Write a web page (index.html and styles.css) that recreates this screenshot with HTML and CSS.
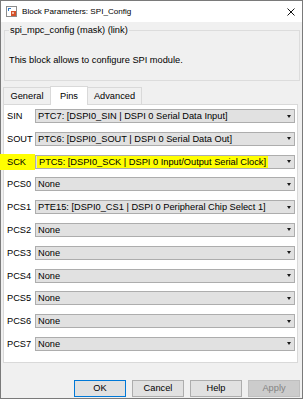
FILE: index.html
```html
<!DOCTYPE html>
<html>
<head>
  <meta charset="utf-8">
  <title>Block Parameters: SPI_Config</title>
  <link rel="stylesheet" href="styles.css">
</head>
<body>
<div class="dialog">
  <div class="titlebar">
    <svg class="app-icon" width="11" height="11" viewBox="0 0 11 11">
      <rect x="0.5" y="0.5" width="10" height="10" fill="#fff" stroke="#8c8c8c"/>
      <path d="M2 2h3v1H3v2H2z" fill="#2f78c4"/>
      <rect x="5" y="5" width="5" height="5" fill="#d4502a"/>
      <rect x="6" y="6" width="2" height="2" fill="#f3b9a4"/>
    </svg>
    <span class="title">Block Parameters: SPI_Config</span>
    <svg class="close" width="8" height="8" viewBox="0 0 8 8">
      <path d="M0.5 0.5L7.5 7.5M7.5 0.5L0.5 7.5" stroke="#111" stroke-width="1"/>
    </svg>
  </div>

  <fieldset class="mask">
    <legend>spi_mpc_config (mask) (link)</legend>
    <p>This block allows to configure SPI module.</p>
  </fieldset>

  <div class="tabs">
    <div class="tab tab-general">General</div>
    <div class="tab tab-pins active">Pins</div>
    <div class="tab tab-advanced">Advanced</div>
  </div>

  <div class="panel">
    <span class="label">SIN</span>
    <div class="combo"><span class="value">PTC7: [DSPI0_SIN | DSPI 0 Serial Data Input]</span><i class="arrow"></i></div>

    <span class="label">SOUT</span>
    <div class="combo"><span class="value">PTC6: [DSPI0_SOUT | DSPI 0 Serial Data Out]</span><i class="arrow"></i></div>

    <span class="label marked">SCK</span>
    <div class="combo"><span class="value marked">PTC5: [DSPI0_SCK | DSPI 0 Input/Output Serial Clock]</span><i class="arrow"></i></div>

    <span class="label">PCS0</span>
    <div class="combo"><span class="value">None</span><i class="arrow"></i></div>

    <span class="label">PCS1</span>
    <div class="combo"><span class="value">PTE15: [DSPI0_CS1 | DSPI 0 Peripheral Chip Select 1]</span><i class="arrow"></i></div>

    <span class="label">PCS2</span>
    <div class="combo"><span class="value">None</span><i class="arrow"></i></div>

    <span class="label">PCS3</span>
    <div class="combo"><span class="value">None</span><i class="arrow"></i></div>

    <span class="label">PCS4</span>
    <div class="combo"><span class="value">None</span><i class="arrow"></i></div>

    <span class="label">PCS5</span>
    <div class="combo"><span class="value">None</span><i class="arrow"></i></div>

    <span class="label">PCS6</span>
    <div class="combo"><span class="value">None</span><i class="arrow"></i></div>

    <span class="label">PCS7</span>
    <div class="combo"><span class="value">None</span><i class="arrow"></i></div>
  </div>

  <div class="buttons">
    <button class="btn default">OK</button>
    <button class="btn">Cancel</button>
    <button class="btn">Help</button>
    <button class="btn disabled">Apply</button>
  </div>
</div>
</body>
</html>
```

FILE: styles.css
```css
html, body {
  margin: 0;
  padding: 0;
}

body {
  font-family: "Liberation Sans", Arial, sans-serif;
  font-size: 9.25px;
  color: #000;
  background: #fff;
}

.dialog {
  width: 303px;
  height: 399px;
  box-sizing: border-box;
  border: 1px solid #7a7a7a;
  background: #f0f0f0;
  display: flex;
  flex-direction: column;
}

/* title bar */
.titlebar {
  height: 21px;
  background: #fff;
  display: flex;
  align-items: center;
  padding: 0 7px 0 5px;
}
.app-icon {
  display: block;
}
.title {
  margin-left: 5px;
  font-size: 8.1px;
}
.close {
  display: block;
  margin-left: auto;
}

/* mask description group */
.mask {
  margin: 2px 2px 0 3px;
  padding: 18px 4px 14px;
  border: 1px solid #dcdcdc;
  min-width: 0;
}
.mask legend {
  padding: 0 1px;
  line-height: 12px;
}
.mask p {
  margin: 0;
  line-height: 12px;
}

/* tabs */
.tabs {
  display: flex;
  align-items: flex-end;
  height: 18px;
  margin: 5px 0 0 2px;
}
.tab {
  box-sizing: border-box;
  height: 17px;
  border: 1px solid #d9d9d9;
  border-bottom: 0;
  margin-right: -1px;
  line-height: 16px;
  text-align: center;
  background: #f0f0f0;
}
.tab-general { width: 48px; }
.tab-pins { width: 38px; }
.tab-advanced { width: 55px; }
.tab.active {
  height: 19px;
  margin-bottom: -1px;
  padding-top: 1px;
  background: #fff;
  position: relative;
  z-index: 1;
}

/* pins panel */
.panel {
  margin: 0 4px 0 2px;
  border: 1px solid #d9d9d9;
  background: #fff;
  padding: 4px 2px 11px 3px;
  display: grid;
  grid-template-columns: 28px 1fr;
  row-gap: 8.8px;
  align-items: center;
}
.label {
  line-height: 14px;
  white-space: nowrap;
}
.label.marked {
  height: 16px;
  line-height: 16px;
  margin: -1px 0 -1px -7px;
  padding-left: 7px;
  background: #ffff00;
}
.combo {
  box-sizing: border-box;
  height: 14px;
  border: 1px solid #adadad;
  background: #e1e1e1;
  display: flex;
  align-items: center;
  padding: 0 3px 0 2px;
  line-height: 12px;
}
.value {
  white-space: nowrap;
}
.value.marked {
  margin-left: -1px;
  padding: 0 2px;
  background: #ffff00;
}
.arrow {
  margin-left: auto;
  width: 0;
  height: 0;
  border-left: 2.5px solid transparent;
  border-right: 2.5px solid transparent;
  border-top: 3px solid #1a1a1a;
}

/* dialog buttons */
.buttons {
  display: flex;
  justify-content: flex-end;
  gap: 6px;
  margin-top: 17px;
  padding-right: 2px;
}
.btn {
  box-sizing: border-box;
  width: 52px;
  height: 17px;
  padding: 0;
  border: 1px solid #adadad;
  background: #e1e1e1;
  font: inherit;
  line-height: 15px;
  color: #000;
  text-align: center;
}
.btn.default {
  border-color: #0078d7;
}
.btn.disabled {
  background: #cccccc;
  border-color: #bfbfbf;
  color: #838383;
}
```
